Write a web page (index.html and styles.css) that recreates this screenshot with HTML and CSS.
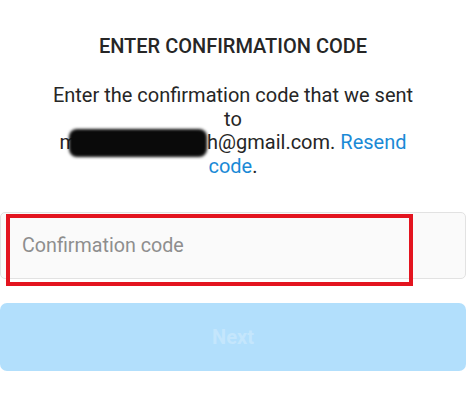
FILE: index.html
```html
<!DOCTYPE html>
<html>
<head>
<meta charset="utf-8">
<link rel="stylesheet" href="styles.css">
</head>
<body>
<div class="page">
  <h1 class="title">ENTER CONFIRMATION CODE</h1>
  <p class="desc">Enter the confirmation code that we sent<br>to<br><span class="email">m<span class="redact"></span>h@gmail.com.</span> <a class="link">Resend<br>code</a>.</p>
  <div class="field">
    <input class="input" type="text" placeholder="Confirmation code">
    <div class="highlight"></div>
  </div>
  <button class="next">Next</button>
</div>
</body>
</html>
```
FILE: styles.css
```css
html, body {
  margin: 0;
  padding: 0;
  background: #ffffff;
}
.page {
  width: 466px;
  font-family: Roboto, "Noto Sans", sans-serif;
  color: #262626;
  display: flex;
  flex-direction: column;
}
.title {
  margin: 34px 0 0;
  font-size: 20px;
  font-weight: 500;
  line-height: 24px;
  text-align: center;
  color: #262626;
}
.desc {
  margin: 26px 48px 0;
  font-size: 20px;
  line-height: 23.5px;
  text-align: center;
  color: #262626;
}
.email {
  white-space: nowrap;
}
.redact {
  display: inline-block;
  width: 138px;
  height: 28px;
  margin: -4px 0 -4px -8px;
  vertical-align: -4px;
  background: #0a0a0a;
  border-radius: 8px;
  filter: blur(1.5px);
}
.link {
  color: #1a8ad6;
}
.field {
  position: relative;
  margin-top: 34px;
}
.input {
  box-sizing: border-box;
  width: 466px;
  height: 67px;
  margin: 0;
  padding: 0 21px;
  border: 1px solid #e2e2e2;
  border-radius: 5px;
  background: #fafafa;
  font-family: Roboto, "Noto Sans", sans-serif;
  font-size: 19.7px;
  color: #262626;
  outline: none;
  display: block;
}
.input::placeholder {
  color: #8e8e8e;
}
.highlight {
  position: absolute;
  left: 6px;
  top: 2px;
  width: 407px;
  height: 72px;
  box-sizing: border-box;
  border: 4px solid #e3141f;
}
.next {
  margin-top: 24px;
  width: 466px;
  height: 68px;
  border: none;
  border-radius: 7px;
  background: #b2dffc;
  color: #c4e6fc;
  font-family: Roboto, "Noto Sans", sans-serif;
  font-size: 20px;
  font-weight: 700;
  padding: 0;
}
```
